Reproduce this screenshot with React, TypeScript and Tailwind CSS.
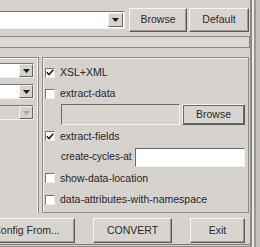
import React from "react";

const Arrow = ({ disabled = false }: { disabled?: boolean }) => (
  <svg width="7" height="4" viewBox="0 0 7 4">
    <path d="M0 0 H7 L3.5 4 Z" fill={disabled ? "#a8a4a0" : "#1a1a1a"} />
  </svg>
);

const ArrowBtn = ({ disabled = false, w = "w-[14px]" }: { disabled?: boolean; w?: string }) => (
  <div
    className={`${w} h-full flex items-center justify-center bg-[#d6d2ce] border-t border-l border-t-[#f2f0ee] border-l-[#f2f0ee] border-b border-r border-b-[#6a6662] border-r-[#6a6662]`}
  >
    <Arrow disabled={disabled} />
  </div>
);

const Check = ({ checked }: { checked: boolean }) => (
  <div className="w-[10px] h-[10px] bg-white border-t border-l border-t-[#7a7672] border-l-[#7a7672] border-b border-r border-b-[#eeece9] border-r-[#eeece9] flex items-center justify-center shrink-0">
    {checked && (
      <svg width="8" height="7" viewBox="0 0 8 7">
        <path d="M0.8 3.2 L3 5.5 L7.3 0.8" stroke="#1c1c1c" strokeWidth="1.6" fill="none" />
      </svg>
    )}
  </div>
);

const Btn = ({ children, className = "" }: { children: React.ReactNode; className?: string }) => (
  <div
    className={`flex items-center justify-center shrink-0 bg-[#d8d4d0] border-t border-l border-t-[#f6f4f2] border-l-[#f6f4f2] border-b border-r border-b-[#5e5a56] border-r-[#5e5a56] shadow-[inset_-1px_-1px_0_#9e9a96] text-[10.5px] text-[#2a2a2a] whitespace-nowrap ${className}`}
  >
    {children}
  </div>
);

const Row = ({ checked, label, h }: { checked: boolean; label: string; h: string }) => (
  <div className={`${h} flex items-center`}>
    <Check checked={checked} />
    <span className="ml-[5px] leading-none whitespace-nowrap">{label}</span>
  </div>
);

export default function App() {
  return (
    <div className="w-[260px] h-[247px] bg-[#d6d2ce] flex overflow-hidden font-['Liberation_Sans',Arial,sans-serif] text-[10.5px] text-[#262626]">
      <div className="w-[250px] shrink-0 flex flex-col">
        {/* top row */}
        <div className="h-[32px] pt-[8px] flex items-start">
          <div className="mt-[3px] w-[125px] h-[18px] flex bg-white border-t border-t-[#7a7672] border-b border-b-[#f2f0ee] border-r border-r-[#f2f0ee]">
            <div className="flex-1" />
            <div className="py-[1px] pr-[1px] h-full">
              <ArrowBtn w="w-[15px]" />
            </div>
          </div>
          <Btn className="ml-[4px] w-[58px] h-[24px]">Browse</Btn>
          <Btn className="ml-[2px] w-[60px] h-[24px]">Default</Btn>
        </div>
        {/* band */}
        <div className="mt-[4px] h-[12px] border-t border-r border-b border-[#8c8884] bg-[#dcd8d4]" />
        {/* main */}
        <div className="mt-[9px] h-[156px] flex gap-[3px]">
          <div className="w-[39px] border-t border-r border-[#8e8a86] shadow-[inset_-1px_1px_0_#f2f0ee] pt-[5px] flex flex-col gap-[6px]">
            <div className="w-[34px] h-[15px] flex bg-white border-t border-t-[#7a7672] border-b border-b-[#f2f0ee] border-r border-r-[#f2f0ee]">
              <div className="flex-1" />
              <ArrowBtn />
            </div>
            <div className="w-[34px] h-[15px] flex bg-white border-t border-t-[#7a7672] border-b border-b-[#f2f0ee] border-r border-r-[#f2f0ee]">
              <div className="flex-1" />
              <ArrowBtn />
            </div>
            <div className="w-[34px] h-[15px] flex bg-[#d6d2ce] border-t border-t-[#7a7672] border-b border-b-[#f2f0ee] border-r border-r-[#f2f0ee]">
              <div className="flex-1" />
              <ArrowBtn disabled />
            </div>
          </div>
          <div className="w-[207px] border border-[#8e8a86] shadow-[inset_1px_1px_0_#f2f0ee] pt-[4px] pl-[2px] flex flex-col">
            <Row checked label="XSL+XML" h="h-[21px]" />
            <Row checked={false} label="extract-data" h="h-[21px]" />
            <div className="h-[21px] flex ml-[16px]">
              <div className="w-[119px] h-[21px] bg-[#d8d4d0] border-t border-l border-t-[#6e6a66] border-l-[#6e6a66] border-b border-r border-b-[#f4f2f0] border-r-[#f4f2f0]" />
              <div className="ml-[2px] w-[63px] h-[21px] flex bg-[#d8d4d0] border-t border-l border-t-[#f6f4f2] border-l-[#f6f4f2] border-b border-r border-b-[#5e5a56] border-r-[#5e5a56]">
                <div className="flex-1 flex items-center justify-center border border-[#d83a3a] text-[10.5px] text-[#2a2a2a]">
                  Browse
                </div>
              </div>
            </div>
            <Row checked label="extract-fields" h="h-[22px]" />
            <div className="h-[20px] flex items-center ml-[16px]">
              <span className="leading-none w-[74px] shrink-0 whitespace-nowrap text-[10px]">create-cycles-at</span>
              <div className="w-[110px] h-[19px] shrink-0 bg-white border-t border-l border-t-[#6e6a66] border-l-[#6e6a66] border-b border-r border-b-[#f4f2f0] border-r-[#f4f2f0]" />
            </div>
            <Row checked={false} label="show-data-location" h="h-[22px]" />
            <Row checked={false} label="data-attributes-with-namespace" h="h-[21px]" />
          </div>
        </div>
        {/* bottom buttons */}
        <div className="mt-[5px] h-[25px] flex">
          <Btn className="ml-[-22px] w-[97px] h-[25px]">Config From...</Btn>
          <Btn className="ml-[18px] w-[79px] h-[25px]">CONVERT</Btn>
          <Btn className="ml-[18px] w-[55px] h-[25px]">Exit</Btn>
        </div>
        <div className="mt-[1px] h-[1px] bg-[#7c7874]" />
        <div className="mt-[1px] h-[1px] bg-[#8c8884]" />
      </div>
      <div className="flex-1 flex">
        <div className="w-[2px] bg-[#8c8884]" />
        <div className="w-[2px] bg-[#eceae8]" />
        <div className="w-[2px] bg-[#9a9692]" />
        <div className="flex-1 bg-[#c4c0bc]" />
      </div>
    </div>
  );
}
